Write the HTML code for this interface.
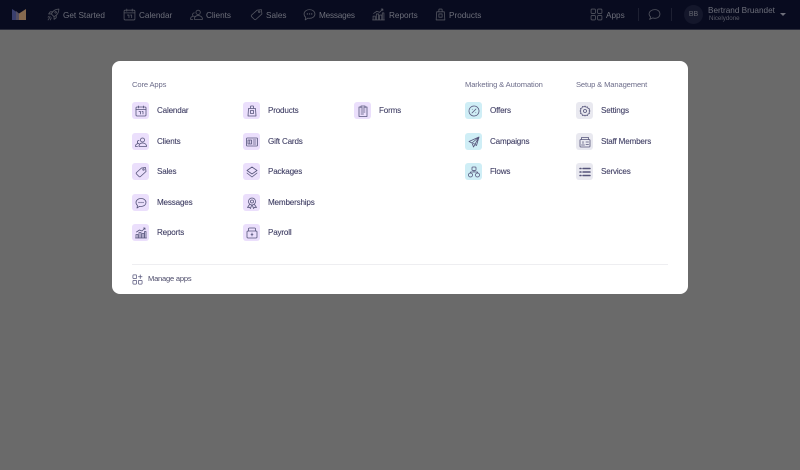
<!DOCTYPE html>
<html><head><meta charset="utf-8"><style>
html,body{margin:0;padding:0}
body{width:800px;height:470px;position:relative;overflow:hidden;background:#6a6a6a;font-family:"Liberation Sans",sans-serif}
#hd{position:absolute;left:0;top:0;width:800px;height:29px;background:#080b1f;border-bottom:1px solid #2a2c3a}
.h{position:absolute;top:11px;font-size:8.2px;line-height:10px;color:#6d6f7a;white-space:nowrap}
.hi{position:absolute;width:13px;height:13px;fill:none;stroke:#52545f;stroke-width:1.5;stroke-linecap:round;stroke-linejoin:round}
.dv{position:absolute;top:8px;width:1px;height:13px;background:#1d2032}
#md{position:absolute;left:112px;top:61px;width:576px;height:233px;background:#fff;border-radius:8px}
.sec{position:absolute;top:80px;font-size:7.6px;line-height:10px;color:#6d6d8a;white-space:nowrap;letter-spacing:-.13px}
.t{position:absolute;width:17px;height:17px;border-radius:3px}
.p{background:#ebdffc}.c{background:#cfeef6}.g{background:#e9e9f0}
.t svg{position:absolute;left:2.5px;top:2.5px;width:12px;height:12px;fill:none;stroke:#55547a;stroke-width:1.6;stroke-linecap:round;stroke-linejoin:round}
.l{position:absolute;font-size:8.1px;line-height:10px;color:#3f3e64;white-space:nowrap;letter-spacing:-.18px;-webkit-text-stroke:.1px #3f3e64}
</style></head><body>
<svg width="0" height="0" style="position:absolute"><defs>
<symbol id="cal" viewBox="0 0 24 24"><rect x="2" y="4" width="20" height="18" rx="2"/><path d="M2 9h20M7 2v4M17 2v4M8 13h3v5M14 13h2v5"/></symbol>
<symbol id="cli" viewBox="0 0 24 24"><circle cx="15" cy="8" r="4"/><path d="M8 21c0-5 3-7 7-7s8 2 8 7zM8 9a3.200 3.200 0 1 0 0 6.500M5 21H1c0-3 1-5 4-5.500"/></symbol>
<symbol id="sal" viewBox="0 0 24 24"><path d="M13 4l8-1 1 8-11 10a2 2 0 0 1-3 0l-5-5a2 2 0 0 1 0-3z"/><circle cx="17" cy="7" r="1.500"/></symbol>
<symbol id="msg" viewBox="0 0 24 24"><path d="M12 3c6 0 10 3.500 10 8s-4 8-10 8c-1 0-2 0-3-.3L4 22l1-5c-2-1.500-3-3.500-3-6 0-4.500 4-8 10-8z"/><path d="M8 11h.1M12 11h.1M16 11h.1" stroke-width="2.500"/></symbol>
<symbol id="rep" viewBox="0 0 24 24"><path d="M2 22v-7h4v7M8 22V11h4v11M14 22v-9h4v9M19 22V9h3v13M1 22h22M3 10l6-4 5 2 6-6M17 2h3v3"/></symbol>
<symbol id="pro" viewBox="0 0 24 24"><path d="M5 7h14l1 15H4zM9 7V3a1 1 0 0 1 1-1h4a1 1 0 0 1 1 1v4M9 11h6v6H9z"/></symbol>
<symbol id="gift" viewBox="0 0 24 24"><rect x="1" y="4" width="22" height="16" rx="1.500"/><path d="M4 8h7v8H4zM14 8h6M14 12h6M14 16h6M7.500 8v8"/></symbol>
<symbol id="pack" viewBox="0 0 24 24"><path d="M12 2l10 7-10 7L2 9zM2 14l10 8 10-8"/></symbol>
<symbol id="mem" viewBox="0 0 24 24"><circle cx="12" cy="9" r="7"/><circle cx="12" cy="9" r="3"/><path d="M7 15l-4 6 4-.5 2 2.500 2-6M17 15l4 6-4-.5-2 2.500-2-6"/></symbol>
<symbol id="pay" viewBox="0 0 24 24"><path d="M5 8V4a2 2 0 0 1 2-2h10a2 2 0 0 1 2 2v4"/><rect x="2" y="8" width="20" height="14" rx="2"/><path d="M12 12v6M10 15h4"/></symbol>
<symbol id="frm" viewBox="0 0 24 24"><path d="M8 4H4v19h16V4h-4"/><path d="M8 2h8v4H8zM8 10h8M8 14h8M8 18h5"/></symbol>
<symbol id="off" viewBox="0 0 24 24"><circle cx="12" cy="12" r="10" stroke-dasharray="3 1"/><path d="M8 16l8-8M8.500 8.500h.1M15.500 15.500h.1"/></symbol>
<symbol id="cam" viewBox="0 0 24 24"><path d="M22 2L2 11l6 3 3 8zM22 2L8 14M22 2l-5 17-6-4"/></symbol>
<symbol id="flo" viewBox="0 0 24 24"><rect x="8" y="2" width="8" height="7" rx="1.500"/><circle cx="5" cy="18" r="4"/><circle cx="19" cy="18" r="4"/><path d="M12 9v3M5 14v-2h14v2"/></symbol>
<symbol id="set" viewBox="0 0 24 24"><path d="M12 2l2 2.500 3-.8 1 3 3 1-.8 3L22 12l-1.800 2 .8 3-3 1-1 3-3-.8L12 22l-2-1.800-3 .8-1-3-3-1 .8-3L2 12l1.800-2L3 7l3-1 1-3 3 .8z"/><circle cx="12" cy="12" r="3"/></symbol>
<symbol id="stf" viewBox="0 0 24 24"><rect x="2" y="7" width="20" height="15" rx="1.500"/><path d="M5 7V3h14v4M5 18h6M8 11v4M14 12h5M14 17h5"/></symbol>
<symbol id="srv" viewBox="0 0 24 24"><path d="M2 5h2M2 12h2M2 19h2M8 5h14M8 12h14M8 19h14" stroke-width="3"/></symbol>
<symbol id="rkt" viewBox="0 0 24 24"><path d="M22 2c-6 0-11 3-14 9l5 5c6-3 9-8 9-14zM8 11H3l3-4h4M13 16v5l4-3v-4M6 16l-4 6M8 18l-2 4M4 15l-2 2"/><circle cx="16" cy="8" r="1.500"/></symbol>
<symbol id="app" viewBox="0 0 24 24"><rect x="2" y="2" width="8" height="8" rx="1.500"/><rect x="14" y="2" width="8" height="8" rx="1.500"/><rect x="2" y="14" width="8" height="8" rx="1.500"/><rect x="14" y="14" width="8" height="8" rx="1.500"/></symbol>
<symbol id="cht" viewBox="0 0 24 24"><path d="M13 3c5 0 9 3 9 8s-4 8-9 8c-1.500 0-3-.2-4-.7L3 21l2-4.500C3 15 2 13 2 11c0-5 5-8 11-8z"/></symbol>
<symbol id="mng" viewBox="0 0 24 24"><rect x="2" y="2" width="8" height="8" rx="1.500"/><path d="M18 2v8M14 6h8"/><rect x="2" y="14" width="8" height="8" rx="1.500"/><rect x="14" y="14" width="8" height="8" rx="1.500"/></symbol>
</defs></svg>

<div id="hd"></div>
<svg style="position:absolute;left:12px;top:9px" width="14" height="11" viewBox="0 0 14 11"><path d="M0 0l7 4.500V11H0z" fill="#3a3f6e"/><path d="M7 4.500L14 0v11H7z" fill="#85694f"/><path d="M4 2L7 4.500V11H4z" fill="#544e62"/></svg>
<svg class="hi" style="left:47px;top:8px"><use href="#rkt"/></svg><div class="h" style="left:63px">Get Started</div>
<svg class="hi" style="left:123px;top:8px"><use href="#cal"/></svg><div class="h" style="left:139px">Calendar</div>
<svg class="hi" style="left:190px;top:8px"><use href="#cli"/></svg><div class="h" style="left:206px">Clients</div>
<svg class="hi" style="left:250px;top:8px"><use href="#sal"/></svg><div class="h" style="left:266px">Sales</div>
<svg class="hi" style="left:303px;top:8px"><use href="#msg"/></svg><div class="h" style="left:319px;letter-spacing:-.2px">Messages</div>
<svg class="hi" style="left:372px;top:8px"><use href="#rep"/></svg><div class="h" style="left:389px">Reports</div>
<svg class="hi" style="left:434px;top:8px"><use href="#pro"/></svg><div class="h" style="left:449px">Products</div>
<svg class="hi" style="left:590px;top:8px"><use href="#app"/></svg><div class="h" style="left:606px">Apps</div>
<div class="dv" style="left:638px"></div>
<svg class="hi" style="left:648px;top:8px"><use href="#cht"/></svg>
<div class="dv" style="left:671px"></div>
<div style="position:absolute;left:684px;top:5px;width:19px;height:19px;border-radius:50%;background:#14172b;color:#63656f;font-size:7px;line-height:19px;text-align:center">BB</div>
<div class="h" style="left:708px;top:6px">Bertrand Bruandet</div>
<div class="h" style="left:709px;top:14px;font-size:6.2px;color:#5b5d69">Nicelydone</div>
<div style="position:absolute;left:780px;top:13px;width:0;height:0;border-left:3px solid transparent;border-right:3px solid transparent;border-top:3.500px solid #6d6f7a"></div>

<div id="md"></div>
<div style="position:absolute;left:132px;top:264px;width:536px;height:1px;background:#eeeef1"></div>
<div class="sec" style="left:132px">Core Apps</div>
<div class="sec" style="left:465px">Marketing &amp; Automation</div>
<div class="sec" style="left:576px">Setup &amp; Management</div>

<div class="t p" style="left:132px;top:102px"><svg><use href="#cal"/></svg></div><div class="l" style="left:157px;top:106px">Calendar</div>
<div class="t p" style="left:132px;top:133px"><svg><use href="#cli"/></svg></div><div class="l" style="left:157px;top:137px">Clients</div>
<div class="t p" style="left:132px;top:163px"><svg><use href="#sal"/></svg></div><div class="l" style="left:157px;top:167px">Sales</div>
<div class="t p" style="left:132px;top:194px"><svg><use href="#msg"/></svg></div><div class="l" style="left:157px;top:198px">Messages</div>
<div class="t p" style="left:132px;top:224px"><svg><use href="#rep"/></svg></div><div class="l" style="left:157px;top:228px">Reports</div>

<div class="t p" style="left:243px;top:102px"><svg><use href="#pro"/></svg></div><div class="l" style="left:268px;top:106px">Products</div>
<div class="t p" style="left:243px;top:133px"><svg><use href="#gift"/></svg></div><div class="l" style="left:268px;top:137px">Gift Cards</div>
<div class="t p" style="left:243px;top:163px"><svg><use href="#pack"/></svg></div><div class="l" style="left:268px;top:167px">Packages</div>
<div class="t p" style="left:243px;top:194px"><svg><use href="#mem"/></svg></div><div class="l" style="left:268px;top:198px">Memberships</div>
<div class="t p" style="left:243px;top:224px"><svg><use href="#pay"/></svg></div><div class="l" style="left:268px;top:228px">Payroll</div>

<div class="t p" style="left:354px;top:102px"><svg><use href="#frm"/></svg></div><div class="l" style="left:379px;top:106px">Forms</div>

<div class="t c" style="left:465px;top:102px"><svg><use href="#off"/></svg></div><div class="l" style="left:490px;top:106px">Offers</div>
<div class="t c" style="left:465px;top:133px"><svg><use href="#cam"/></svg></div><div class="l" style="left:490px;top:137px">Campaigns</div>
<div class="t c" style="left:465px;top:163px"><svg><use href="#flo"/></svg></div><div class="l" style="left:490px;top:167px">Flows</div>

<div class="t g" style="left:576px;top:102px"><svg><use href="#set"/></svg></div><div class="l" style="left:601px;top:106px">Settings</div>
<div class="t g" style="left:576px;top:133px"><svg><use href="#stf"/></svg></div><div class="l" style="left:601px;top:137px">Staff Members</div>
<div class="t g" style="left:576px;top:163px"><svg><use href="#srv"/></svg></div><div class="l" style="left:601px;top:167px">Services</div>

<svg style="position:absolute;left:131.500px;top:273.500px;width:11px;height:11px;fill:none;stroke:#55547a;stroke-width:1.600;stroke-linecap:round;stroke-linejoin:round"><use href="#mng"/></svg>
<div class="l" style="left:148px;top:274px;font-size:7.500px;letter-spacing:-.18px;color:#4a4968;-webkit-text-stroke:0">Manage apps</div>
</body></html>
